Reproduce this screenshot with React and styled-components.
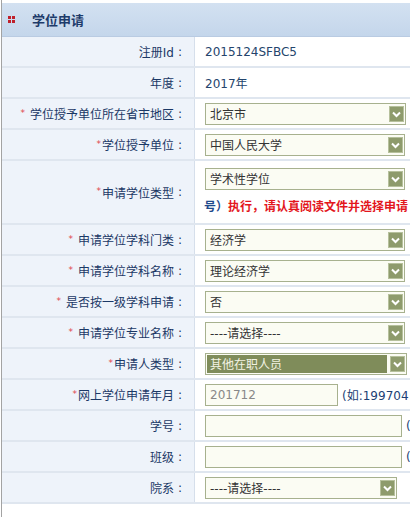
import React from 'react';
import styled, { createGlobalStyle } from 'styled-components';

const GlobalStyle = createGlobalStyle`
  html, body {
    margin: 0;
    padding: 0;
    background: #ffffff;
    overflow: hidden;
  }
  body {
    font-family: "DejaVu Sans", "Noto Sans CJK SC", sans-serif;
    font-size: 12px;
  }
`;

const Page = styled.div`
  margin-left: 1px;
  border-left: 1px solid #a3a3a3;
  min-height: 517px;
  padding-top: 3px;
  box-sizing: border-box;
  width: 420px;
`;

const Header = styled.div`
  height: 34px;
  display: flex;
  align-items: center;
  background: linear-gradient(#d3e1f1, #c4d6eb);
  border-bottom: 1px solid #b9cbe2;
  box-sizing: border-box;
`;

const HeaderIcon = styled.svg`
  margin: 0 17px 0 6px;
  flex-shrink: 0;
`;

const Title = styled.span`
  font-family: "Noto Sans CJK SC", sans-serif;
  font-weight: bold;
  font-size: 13px;
  color: #1e3b6a;
`;

const Row = styled.div`
  display: grid;
  grid-template-columns: 193px 1fr;
  border-bottom: 2px solid #dfe6ef;
  min-height: ${p => (p.tall ? 62 : 29)}px;
`;

const Label = styled.div`
  background: #eef3fa;
  border-right: 1px solid #d6dfeb;
  display: flex;
  align-items: center;
  justify-content: flex-end;
  padding-right: 8px;
  color: #1b3866;
  white-space: nowrap;
`;

const Colon = styled.span`
  display: inline-block;
  width: 12px;
  text-align: center;
`;

const Star = styled.span`
  color: #e0454c;
  font-size: 9px;
  margin-right: ${p => (p.gap ? 5 : 1)}px;
  position: relative;
  top: -1px;
`;

const Cell = styled.div`
  display: flex;
  flex-direction: column;
  justify-content: center;
  gap: 7px;
  padding: ${p => (p.tall ? '5px 0 8px 10px' : '0 0 0 10px')};
  white-space: nowrap;
  color: #24446c;
`;

const Line = styled.div`
  display: flex;
  align-items: center;
`;

const Select = styled.div`
  width: ${p => p.w}px;
  height: 22px;
  box-sizing: border-box;
  border: 1px solid #a7b18e;
  background: #fbfcf3;
  display: flex;
  align-items: center;
  justify-content: space-between;
  padding: ${p => (p.active ? '1px 0 1px 1px' : '0 0 0 4px')};
  color: #333333;
`;

const SelectText = styled.span`
  flex: 1;
  height: 100%;
  display: flex;
  align-items: center;
  padding-left: ${p => (p.active ? '3px' : '0')};
  margin-right: ${p => (p.active ? '3px' : '0')};
  background: ${p => (p.active ? '#7f8c5a' : 'transparent')};
  color: ${p => (p.active ? '#f3f3e3' : '#333333')};
`;

const Input = styled.div`
  width: ${p => p.w}px;
  height: 22px;
  box-sizing: border-box;
  border: 1px solid #a7b18e;
  background: #fbfcf3;
  display: flex;
  align-items: center;
  padding-left: 4px;
  color: #888888;
`;

const Hint = styled.span`
  margin-left: 4px;
  color: #1d3f74;
`;

const Note = styled.div`
  font-family: "Noto Sans CJK SC", sans-serif;
  font-weight: bold;
  color: #e3161d;
  margin-left: -1px;
`;

const NoteBlue = styled.span`
  color: #1f4a8c;
`;

const Arrow = () => (
  <svg width="15" height="16" viewBox="0 0 15 16" style={{ marginRight: 1, flexShrink: 0 }}>
    <rect x="0.5" y="0.5" width="14" height="15" fill="#8e9b6c" stroke="#b6c09c" />
    <polyline points="4,6.5 7.5,10 11,6.5" fill="none" stroke="#ffffff" strokeWidth="2" />
  </svg>
);

const rows = [
  { label: '注册Id', text: '2015124SFBC5' },
  { label: '年度', text: '2017年' },
  { label: '学位授予单位所在省市地区', req: 'gap', select: '北京市', w: 201 },
  { label: '学位授予单位', req: 'tight', select: '中国人民大学', w: 200 },
  { label: '申请学位类型', req: 'tight', select: '学术性学位', w: 200, note: true },
  { label: '申请学位学科门类', req: 'gap', select: '经济学', w: 200 },
  { label: '申请学位学科名称', req: 'gap', select: '理论经济学', w: 200 },
  { label: '是否按一级学科申请', req: 'gap', select: '否', w: 200 },
  { label: '申请学位专业名称', req: 'gap', select: '----请选择----', w: 200 },
  { label: '申请人类型', req: 'tight', select: '其他在职人员', w: 202, active: true },
  { label: '网上学位申请年月', req: 'tight', input: '201712', w: 133, hint: '(如:199704' },
  { label: '学号', input: '', w: 197, hint: '(' },
  { label: '班级', input: '', w: 197, hint: '(' },
  { label: '院系', select: '----请选择----', w: 192 },
];

const App = () => (
  <>
    <GlobalStyle />
    <Page>
      <Header>
        <HeaderIcon width="7" height="7" viewBox="0 0 7 7">
          <rect x="0" y="0" width="3" height="3" fill="#c0202b" />
          <rect x="4" y="0" width="3" height="3" fill="#c0202b" />
          <rect x="0" y="4" width="3" height="3" fill="#c0202b" />
          <rect x="4" y="4" width="3" height="3" fill="#c0202b" />
        </HeaderIcon>
        <Title>学位申请</Title>
      </Header>
      {rows.map(r => (
        <Row key={r.label} tall={r.note}>
          <Label>
            {r.req && <Star gap={r.req === 'gap'}>*</Star>}
            {r.label}
            <Colon>:</Colon>
          </Label>
          <Cell tall={r.note}>
            {r.text && <Line>{r.text}</Line>}
            {r.select && (
              <Line>
                <Select w={r.w} active={r.active}>
                  <SelectText active={r.active}>{r.select}</SelectText>
                  <Arrow />
                </Select>
              </Line>
            )}
            {r.input !== undefined && (
              <Line>
                <Input w={r.w}>{r.input}</Input>
                <Hint>{r.hint}</Hint>
              </Line>
            )}
            {r.note && (
              <Note>
                <NoteBlue>号）</NoteBlue>执行，请认真阅读文件并选择申请
              </Note>
            )}
          </Cell>
        </Row>
      ))}
    </Page>
  </>
);

export default App;
